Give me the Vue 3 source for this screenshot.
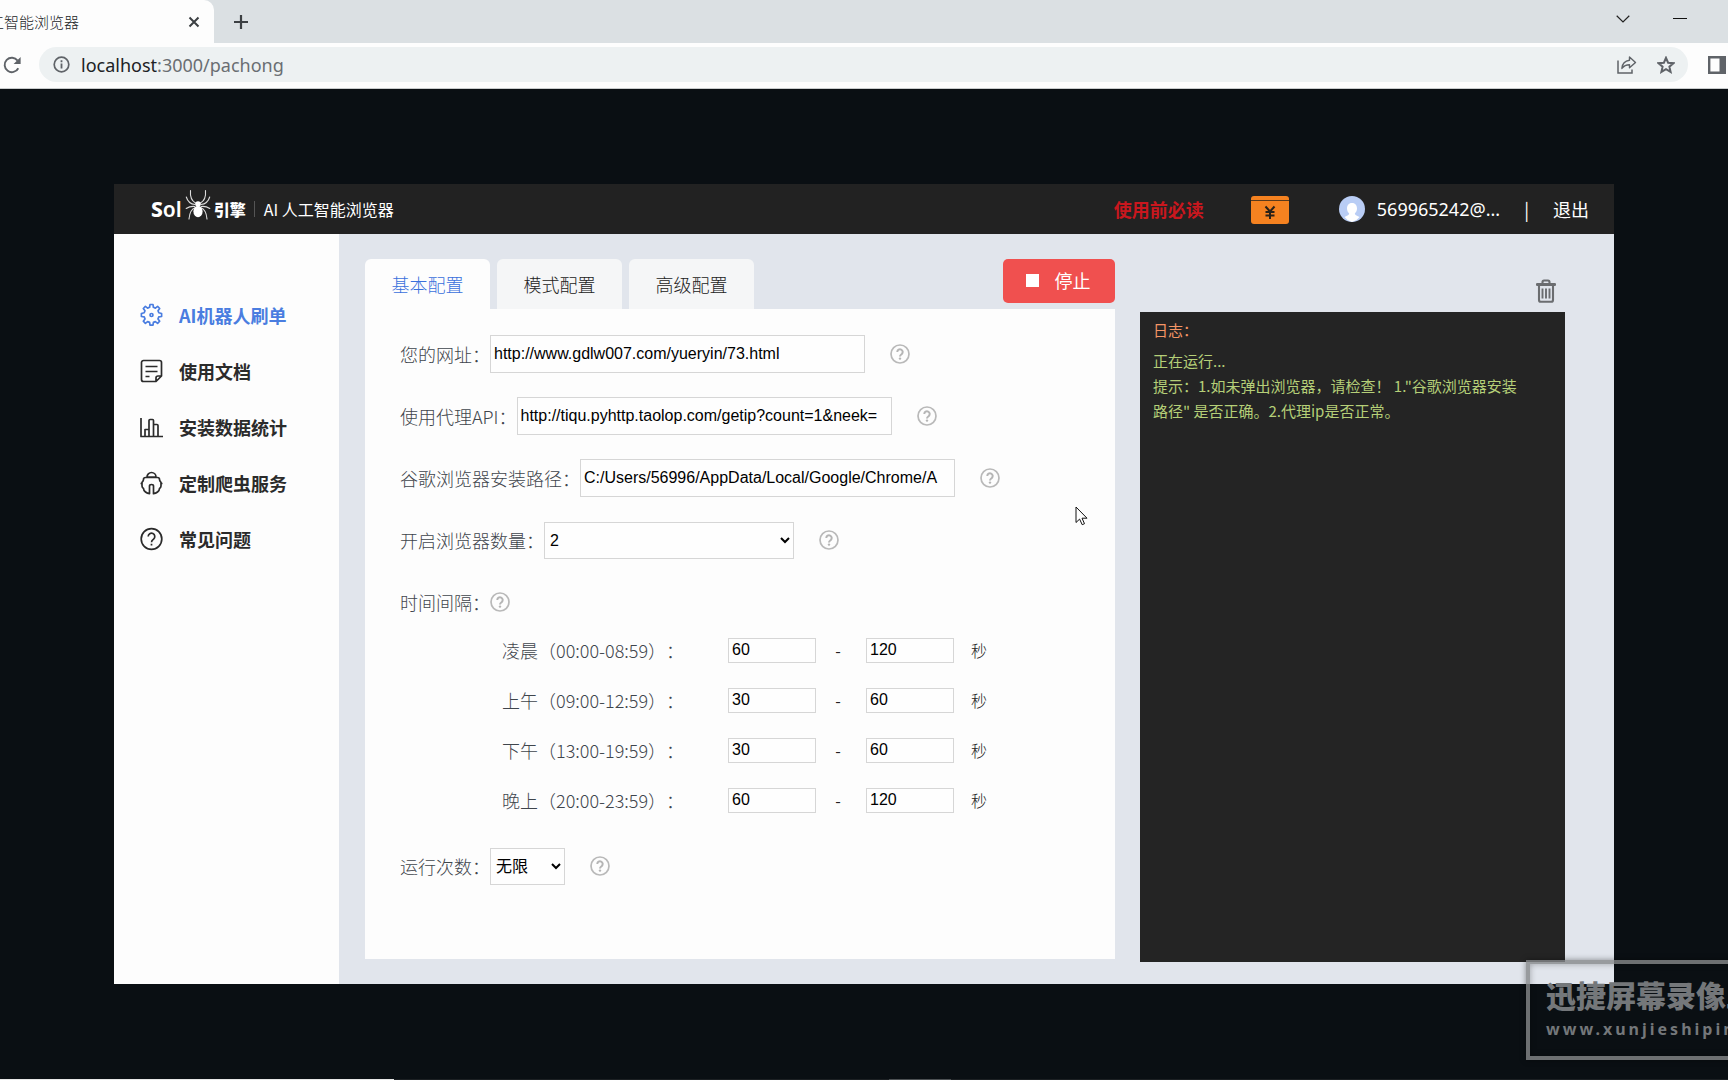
<script setup>
import { ref } from 'vue'

const navItems = [
  { icon: 'gear', label: 'AI机器人刷单', active: true },
  { icon: 'doc', label: '使用文档' },
  { icon: 'chart', label: '安装数据统计' },
  { icon: 'bug', label: '定制爬虫服务' },
  { icon: 'help', label: '常见问题' },
]
const tabs = ['基本配置', '模式配置', '高级配置']
const activeTab = ref(0)

const fields = ref([
  { id: 'site', label: '您的网址：', value: 'http://www.gdlw007.com/yueryin/73.html' },
  { id: 'proxy', label: '使用代理API：', value: 'http://tiqu.pyhttp.taolop.com/getip?count=1&neek=' },
  { id: 'path', label: '谷歌浏览器安装路径：', value: 'C:/Users/56996/AppData/Local/Google/Chrome/A' },
])
const browserCount = ref('2')
const runTimes = ref('无限')
const periods = ref([
  { label: '凌晨（00:00-08:59）：', min: '60', max: '120' },
  { label: '上午（09:00-12:59）：', min: '30', max: '60' },
  { label: '下午（13:00-19:59）：', min: '30', max: '60' },
  { label: '晚上（20:00-23:59）：', min: '60', max: '120' },
])
</script>

<template>
  <div class="screen">
    <svg class="defs" width="0" height="0" aria-hidden="true">
      <symbol id="tip" viewBox="0 0 20 20">
        <circle cx="10" cy="10" r="9" fill="none" stroke="#b9b9b9" stroke-width="1.7" />
        <path d="M7.300 8a2.700 2.700 0 1 1 4.400 2.100c-1 .7-1.700 1.100-1.700 2.400" fill="none" stroke="#b5b5b5" stroke-width="2" />
        <circle cx="10" cy="14.600" r="1.200" fill="#b5b5b5" />
      </symbol>
    </svg>

    <div class="tabstrip">
      <div class="browser-tab">
        <span class="tab-title"><span>工智能浏览器</span></span>
        <button class="bare" aria-label="关闭">
          <svg width="12" height="12" viewBox="0 0 12 12"><path d="M1.500 1.500l9 9M10.500 1.500l-9 9" stroke="#3c4043" stroke-width="2" /></svg>
        </button>
      </div>
      <button class="bare new-tab" aria-label="新标签页">
        <svg width="16" height="16" viewBox="0 0 16 16"><path d="M8 1v14M1 8h14" stroke="#3c4043" stroke-width="2.200" /></svg>
      </button>
      <div class="window-keys">
        <svg width="14" height="8" viewBox="0 0 14 8"><path d="M.7 .8L7 7l6.300-6.200" fill="none" stroke="#222" stroke-width="1.200" /></svg>
        <svg width="14" height="8" viewBox="0 0 14 8"><path d="M0 3.500h14" stroke="#111" stroke-width="1" /></svg>
      </div>
    </div>

    <div class="toolbar">
      <button class="bare" aria-label="刷新">
        <svg width="18" height="18" viewBox="0 0 18 18"><path d="M15.300 12.200A7.200 7.200 0 1 1 14.600 4.600" fill="none" stroke="#5f6368" stroke-width="1.900" /><path d="M17.600 1v7h-7z" fill="#5f6368" /></svg>
      </button>
      <div class="address">
        <svg width="17" height="17" viewBox="0 0 17 17"><circle cx="8.500" cy="8.500" r="7.300" fill="none" stroke="#5f6368" stroke-width="1.700" /><path d="M8.500 7.500v5M8.500 4.300v1.900" stroke="#5f6368" stroke-width="1.800" /></svg>
        <span class="url"><b>localhost</b>:3000/pachong</span>
        <svg class="share" width="20" height="18" viewBox="0 0 20 18"><path d="M1 4.500v12.500h14v-3.500" fill="none" stroke="#5f6368" stroke-width="1.500" /><path d="M12.500 1l6 5.500-6 5.300V8.700C9 8.700 6.800 9.800 4.900 12.400 5.300 8 8.300 4.800 12.500 4.300z" fill="none" stroke="#5f6368" stroke-width="1.400" stroke-linejoin="round" /></svg>
        <svg width="18" height="18" viewBox="0 0 18 18"><path d="M9 1.800l2.100 4.900 5.300.5-4 3.500 1.200 5.200L9 13.100l-4.600 2.800 1.200-5.200-4-3.500 5.300-.5z" fill="none" stroke="#5f6368" stroke-width="2" /></svg>
      </div>
      <svg class="panel-key" width="18" height="18" viewBox="0 0 18 18"><path d="M1.200 1.200h15.600v15.600H1.200z" fill="none" stroke="#5f6368" stroke-width="2.400" /><path d="M11.500 1h6v16h-6z" fill="#5f6368" /></svg>
    </div>

    <main class="stage">
      <div class="app">
        <header class="topbar">
          <div class="brand">
            <span class="sol"><b>S</b>ol</span>
            <svg width="26" height="32" viewBox="0 0 26 32" fill="none" stroke="#dcdcdc" stroke-width="1.100" stroke-linecap="round">
              <path d="M10.500 14C7 12 5 7 5.500 1.500M15.500 14c3.500-2 5.500-7 5-12.500M10 15.500C5 15 2.500 12 1.300 8M16 15.500c5-.5 7.500-3.500 8.700-7.500M10 17.500c-4-.5-6.500.5-8.800 2M16 17.500c4-.5 6.500.5 8.800 2M10.500 18.500C6 20 4.500 24 4 30M15.500 18.500c4.500 1.500 6 5.500 6.500 11.500" />
              <circle cx="13" cy="15" r="2.800" fill="#fff" stroke="none" />
              <ellipse cx="13" cy="22.500" rx="4.600" ry="5.800" fill="#fff" stroke="none" />
            </svg>
            <b class="engine">引擎</b>
            <span class="slogan">AI 人工智能浏览器</span>
          </div>
          <a href="#" class="notice">使用前必读</a>
          <svg class="wallet" width="38" height="28" viewBox="0 0 38 28">
            <rect width="38" height="28" rx="3" fill="#f58220" />
            <path d="M0 4.500h38" stroke="#5a3a1c" stroke-width="1.200" />
            <path d="M14.500 10.500l4.500 5 4.500-5M19 15.500V23M14.500 16h9M14.500 19.500h9" fill="none" stroke="#2a2118" stroke-width="2" />
          </svg>
          <svg class="avatar" width="26" height="26" viewBox="0 0 26 26">
            <circle cx="13" cy="13" r="13" fill="#b9cdf5" />
            <path d="M13 7c3.500 0 5 2.500 5 5.500 0 2-1 4-2.200 5 .2 1.500 1.500 2 4.700 3.400A13 13 0 0 1 13 26 13 13 0 0 1 5.500 20.900C8.700 19.500 10 19 10.200 17.500 9 16.500 8 14.500 8 12.500 8 9.500 9.500 7 13 7z" fill="#fff" />
          </svg>
          <span class="user">569965242@...</span>
          <span class="bar">|</span>
          <a href="#" class="logout">退出</a>
        </header>

        <div class="body">
          <nav class="sidebar">
            <a v-for="item in navItems" :key="item.label" href="#" :class="['nav-item', { active: item.active }]">
              <svg width="23" height="24" viewBox="0 0 23 24" fill="none" stroke="currentColor" stroke-width="1.700" stroke-linejoin="round">
                <template v-if="item.icon === 'gear'">
                  <path d="M9.600 4.300L10 1.500h3l.4 2.800 2 .8 2.200-1.700 2.100 2.100L18 7.700l.8 2 2.800.8v3l-2.800.4-.8 2 1.700 2.300-2.100 2.100-2.200-1.700-2 .8-.4 2.800h-3l-.4-2.800-2-.8-2.200 1.700-2.100-2.100L5 15.900l-.8-2-2.800-.4v-3l2.800-.8.8-2L3.300 5.500l2.100-2.100 2.200 1.700z" />
                  <circle cx="11.500" cy="12" r="1.500" />
                </template>
                <template v-else-if="item.icon === 'doc'">
                  <path d="M14.500 22.500H3.500a2 2 0 0 1-2-2v-17a2 2 0 0 1 2-2h16a2 2 0 0 1 2 2V17l-5.500 5.500zM21.500 17H18a2 2 0 0 0-2 2v3.500M5.500 7.500h12M5.500 12.500h12M5.500 17.500h4" />
                </template>
                <template v-else-if="item.icon === 'chart'">
                  <path d="M1 3v18.500h22M5 21v-6.500h4M9 21V5.500q0-1 1-1h2.500q1 0 1 1V21M13.500 9.500H17q1 0 1 1V21" />
                </template>
                <template v-else-if="item.icon === 'bug'">
                  <path d="M7 6a4.500 4.500 0 0 1 9 0zM3.500 8.500q0-2 2-2h12q2 0 2 2 0 1.500 1.500 2.800v1.200h1.500M.5 12.500H2v-1.200Q3.500 10 3.500 8.500M2 12.500v2.500q0 1.500 1.500 2.500 0 2 2 3.500 1.800 1.500 4 1.700V15q0-1.500 2-1.500t2 1.500v7.700q2.200-.2 4-1.700 2-1.500 2-3.500Q21 16.500 21 15v-2.500" />
                </template>
                <template v-else>
                  <circle cx="11.500" cy="12" r="10.300" />
                  <path d="M8.200 9.500a3.300 3.300 0 1 1 5.400 2.600c-1.300 1-2.100 1.600-2.100 3.100M11.500 16.800v1.700" />
                </template>
              </svg>
              <span>{{ item.label }}</span>
            </a>
          </nav>

          <section class="content">
            <div class="config">
              <div class="config-head">
                <button v-for="(tab, i) in tabs" :key="tab" :class="['tab', { on: i === activeTab }]" @click="activeTab = i">{{ tab }}</button>
                <button class="stop"><i></i>停止</button>
              </div>
              <form class="panel" @submit.prevent>
                <div v-for="field in fields" :key="field.id" class="row">
                  <label :for="field.id">{{ field.label }}</label>
                  <input :id="field.id" v-model="field.value" class="wide" type="text">
                  <svg class="tip"><use href="#tip" /></svg>
                </div>
                <div class="row">
                  <label for="count">开启浏览器数量：</label>
                  <select id="count" v-model="browserCount" class="count"><option>1</option><option>2</option><option>3</option></select>
                  <svg class="tip"><use href="#tip" /></svg>
                </div>
                <div class="row">
                  <span class="caption">时间间隔：</span>
                  <svg class="tip near"><use href="#tip" /></svg>
                </div>
                <div class="periods">
                  <div v-for="(p, i) in periods" :key="p.label" class="period">
                    <label :for="'min' + i">{{ p.label }}</label>
                    <input :id="'min' + i" v-model="p.min" type="text">
                    <span class="dash">-</span>
                    <input :id="'max' + i" v-model="p.max" type="text" :aria-label="p.label">
                    <span class="unit">秒</span>
                  </div>
                </div>
                <div class="row">
                  <label for="times">运行次数：</label>
                  <select id="times" v-model="runTimes" class="times"><option>无限</option></select>
                  <svg class="tip"><use href="#tip" /></svg>
                </div>
              </form>
            </div>

            <div class="log-col">
              <button class="bare trash" aria-label="清空">
                <svg width="20" height="24" viewBox="0 0 20 24" fill="none" stroke="#6b6d70">
                  <path d="M1.300 5.500h17.400" stroke-width="2.800" stroke-linecap="round" />
                  <path d="M6.500 5V3q0-1.500 1.500-1.500h4q1.500 0 1.500 1.500v2M3 6.500V21q0 1.800 1.800 1.800h10.400Q17 22.800 17 21V6.500" stroke-width="2.100" />
                  <path d="M6.500 9.500v10M10 9.500v10M13.500 9.500v10" stroke-width="1.900" />
                </svg>
              </button>
              <div class="log">
                <p class="log-title">日志：</p>
                <p>正在运行...</p>
                <p>提示：1.如未弹出浏览器，请检查！ 1."谷歌浏览器安装路径" 是否正确。2.代理ip是否正常。</p>
              </div>
            </div>
          </section>
        </div>
      </div>
    </main>

    <div class="taskbar"><i class="seg-light"></i><i class="seg-dim"></i></div>

    <svg class="cursor" width="13" height="20" viewBox="0 0 13 20"><path d="M1 1v15.500l3.600-3.400 2.600 5.600 2.300-1-2.500-5.500h5z" fill="#fff" stroke="#111" /></svg>

    <div class="watermark">
      <strong>迅捷屏幕录像工具</strong>
      <span>www.xunjieshipin.com</span>
    </div>
  </div>
</template>

<style>
body {
  margin: 0;
  background: #0a0f13;
}
</style>

<style scoped>
.screen {
  position: relative;
  display: flex;
  flex-direction: column;
  min-height: 100vh;
  overflow: hidden;
  background: #0a0f13;
  font-family: "Noto Sans CJK SC", sans-serif;
  font-size: 18px;
  text-spacing-trim: space-all;
}
.screen * {
  box-sizing: border-box;
}
.defs {
  position: absolute;
}
svg {
  display: block;
  flex: none;
}
a {
  text-decoration: none;
}
button {
  font: inherit;
  border: 0;
  cursor: pointer;
}
.bare {
  padding: 0;
  background: none;
}

/* browser chrome */
.tabstrip {
  display: flex;
  align-items: center;
  height: 43px;
  background: #dbe0e3;
}
.browser-tab {
  display: flex;
  align-items: center;
  justify-content: space-between;
  width: 214px;
  height: 43px;
  padding-right: 14px;
  border-radius: 0 10px 0 0;
  background: #fdfdfd;
}
.tab-title {
  display: flex;
  justify-content: flex-end;
  width: 79px;
  overflow: hidden;
  font-size: 15px;
  font-weight: 300;
  white-space: nowrap;
  color: #222528;
}
.new-tab {
  margin-left: 19px;
}
.window-keys {
  display: flex;
  gap: 43px;
  margin: 0 41px 6px auto;
}
.toolbar {
  display: flex;
  align-items: center;
  height: 46px;
  padding: 0 0 2px 3px;
  border-bottom: 1px solid #c9cccd;
  background: #fdfdfd;
}
.address {
  display: flex;
  flex: 1;
  align-items: center;
  height: 35px;
  margin: 0 20px 0 18px;
  padding: 0 13px 0 14px;
  border-radius: 18px;
  background: #edf1f2;
}
.url {
  margin-left: 11px;
  font-family: "Noto Sans", sans-serif;
  color: #6a6e72;
}
.url b {
  font-weight: 400;
  color: #202124;
}
.share {
  margin: 0 20px 0 auto;
}
.panel-key {
  margin-right: 2px;
}

/* application window */
.stage {
  flex: 1;
  padding: 95px 114px;
}
.app {
  max-width: 1500px;
  margin: 0 auto;
}
.topbar {
  display: flex;
  align-items: center;
  height: 50px;
  padding: 0 25px 0 37px;
  background: #222;
  color: #fff;
}
.brand {
  display: flex;
  align-items: center;
  margin-right: auto;
}
.sol {
  margin-right: 3px;
  font-family: "Noto Sans", sans-serif;
  font-size: 21px;
  font-weight: 600;
}
.sol b {
  font-weight: 800;
}
.brand > svg {
  margin-bottom: 8px;
}
.engine {
  margin: 0 8px 0 3px;
  font-size: 16px;
  font-weight: 900;
}
.slogan {
  padding-left: 9px;
  border-left: 1px solid #555;
  font-size: 16px;
  line-height: 16px;
}
.notice {
  font-weight: 700;
  color: #c9171e;
}
.wallet {
  margin: 2px 50px 0 47px;
}
.user {
  margin-left: 12px;
  font-family: "Noto Sans", sans-serif;
}
.bar {
  margin: 0 24px;
}
.logout {
  color: #fff;
}
.body {
  display: flex;
  min-height: 750px;
}
.sidebar {
  width: 15%;
  padding-top: 53px;
  background: #fdfdfd;
}
.nav-item {
  display: flex;
  align-items: center;
  gap: 16px;
  height: 56px;
  padding-left: 26px;
  font-weight: 700;
  color: #2b2b2b;
}
.nav-item.active {
  color: #4a7de0;
}
.content {
  display: flex;
  flex: 1;
  padding: 25px 49px 22px 26px;
  background: #e1e5ec;
}
.config {
  display: flex;
  flex-direction: column;
  flex: 750;
  margin-bottom: 3px;
}
.config-head {
  display: flex;
  align-items: flex-start;
  gap: 7px;
}
.tab {
  width: 125px;
  height: 50px;
  border-radius: 6px 6px 0 0;
  background: #f5f6f7;
  color: #222;
  font-weight: 300;
}
.tab.on {
  background: #fdfdfd;
  color: #3a70dc;
}
.stop {
  display: flex;
  align-items: center;
  justify-content: center;
  gap: 16px;
  width: 112px;
  height: 44px;
  margin-left: auto;
  padding: 0 8px 2px 6px;
  border-radius: 5px;
  background: #f0504f;
  color: #fff;
}
.stop i {
  width: 13px;
  height: 13px;
  background: #fff;
}
.panel {
  flex: 1;
  padding: 26px 35px;
  background: #fdfdfd;
}
.row {
  display: flex;
  align-items: center;
  height: 38px;
  margin-bottom: 24px;
  color: #3f454c;
  font-weight: 300;
}
input,
select {
  border: 1px solid #d6d6d6;
  border-radius: 0;
  background: #fefefe;
  color: #000;
  font-family: "Liberation Sans", "Noto Sans CJK SC", sans-serif;
  font-size: 16px;
  outline: none;
}
input {
  padding: 0 3px;
}
select {
  padding: 0 3px 0 1px;
}
.wide {
  width: 375px;
  height: 38px;
}
.count {
  width: 250px;
  height: 37px;
}
.times {
  width: 75px;
  height: 37px;
}
.tip {
  width: 20px;
  height: 20px;
  margin-left: 25px;
}
.tip.near {
  margin-left: 0;
}
.periods {
  display: flex;
  flex-direction: column;
  gap: 24px;
  margin: -8px 0 34px;
  padding-left: 102px;
}
.period {
  display: flex;
  align-items: center;
  height: 26px;
  color: #3f454c;
  font-weight: 300;
}
.period label {
  width: 226px;
}
.period input {
  width: 88px;
  height: 25px;
}
.dash {
  width: 50px;
  padding-right: 6px;
  text-align: center;
  font-size: 16px;
  font-weight: 400;
  color: #222;
}
.unit {
  margin-left: 17px;
  font-size: 16px;
  color: #222;
}
.log-col {
  display: flex;
  flex: 425;
  flex-direction: column;
  margin-left: 25px;
}
.trash {
  align-self: flex-end;
  margin: 20px 9px 9px 0;
}
.log {
  flex: 1;
  padding: 5px 36px 5px 13px;
  background: #242424;
  color: #b5cf78;
  font-size: 15px;
  line-height: 25px;
}
.log p {
  margin: 0;
}
.log .log-title {
  margin-bottom: 6px;
  color: #f59566;
}

/* screen edge and overlays */
.taskbar {
  display: flex;
  height: 2px;
  background: #1c2023;
}
.seg-light {
  width: 394px;
  background: #e8e8e8;
}
.seg-dim {
  width: 62px;
  margin-left: 495px;
  background: #4c5053;
}
.cursor {
  position: absolute;
  top: 506px;
  left: 1075px;
}
.watermark {
  position: absolute;
  right: -60px;
  bottom: 21px;
  display: flex;
  flex-direction: column;
  width: 262px;
  height: 100px;
  padding: 12px 0 0 16px;
  border: 4px solid rgba(134, 136, 139, 0.8);
  box-shadow: 0 0 6px rgba(0, 0, 0, 0.4), inset 0 0 6px rgba(0, 0, 0, 0.3);
  color: #74777a;
  white-space: nowrap;
}
.watermark strong {
  font-size: 30px;
  line-height: 36px;
  font-weight: 900;
}
.watermark span {
  padding-top: 4px;
  font-family: "Noto Sans", sans-serif;
  font-size: 16px;
  line-height: 26px;
  font-weight: 700;
  letter-spacing: 3px;
}
</style>
